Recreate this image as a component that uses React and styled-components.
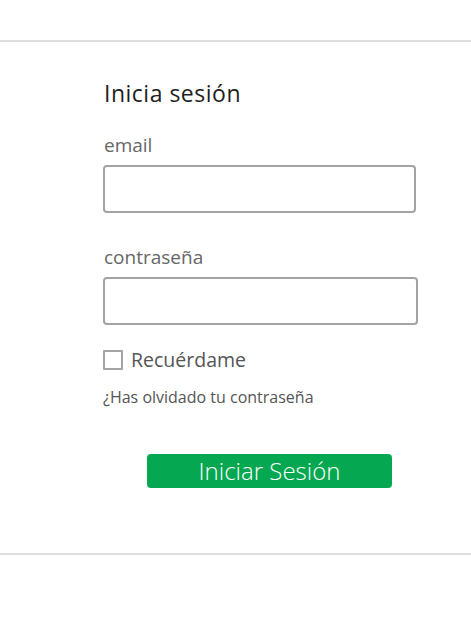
import React from "react";
import styled, { createGlobalStyle } from "styled-components";

const Global = createGlobalStyle`
  html, body { margin: 0; padding: 0; background: #ffffff; }
  body { font-family: "Open Sans", "Noto Sans", sans-serif; }
  * { box-sizing: border-box; }
`;

const Page = styled.div`
  width: 471px;
  min-height: 622px;
  display: flex;
  flex-direction: column;
  background: #fff;
`;

const TopBar = styled.div`
  height: 42px;
  border-bottom: 2px solid #dedede;
`;

const Main = styled.main`
  height: 513px;
  border-bottom: 2px solid #dedede;
  padding: 36px 0 0 103px;
  display: flex;
  flex-direction: column;
  align-items: flex-start;
`;

const Bottom = styled.div`
  flex: 1;
  background: #ffffff;
`;

const Title = styled.h1`
  margin: 0 0 0 1px;
  font-size: 23px;
  line-height: 30px;
  font-weight: 500;
  color: #1e1e1e;
  letter-spacing: 0.5px;
`;

const Label = styled.label`
  display: block;
  margin: ${(p) => p.$top}px 0 0 1px;
  font-size: 19px;
  line-height: 24px;
  color: #666;
`;

const Input = styled.input`
  display: block;
  margin-top: 8px;
  width: ${(p) => p.$w}px;
  height: 48px;
  border: 2px solid #a3a3a3;
  border-radius: 4px;
  background: #fff;
  outline: none;
  font: inherit;
`;

const CheckRow = styled.label`
  display: flex;
  align-items: center;
  gap: 8px;
  margin-top: 24px;
  font-size: 19.5px;
  line-height: 22px;
  color: #555;
`;

const Box = styled.span`
  width: 20px;
  height: 20px;
  border: 2px solid #a3a3a3;
  border-radius: 1px;
  background: #fff;
`;

const Forgot = styled.a`
  margin-top: 16px;
  font-size: 16px;
  line-height: 20px;
  color: #555;
  text-decoration: none;
`;

const Submit = styled.button`
  margin: 47px 0 0 44px;
  width: 245px;
  height: 34px;
  border: none;
  border-radius: 4px;
  background: #05a851;
  color: #fff;
  font-family: inherit;
  font-size: 24px;
  font-weight: 300;
  line-height: 34px;
  padding: 0;
`;

export default function App() {
  return (
    <>
      <Global />
      <Page>
        <TopBar />
        <Main>
          <Title>Inicia sesión</Title>
          <Label $top={25}>email</Label>
          <Input $w={313} type="text" />
          <Label $top={32}>contraseña</Label>
          <Input $w={315} type="password" />
          <CheckRow>
            <Box />
            Recuérdame
          </CheckRow>
          <Forgot>¿Has olvidado tu contraseña</Forgot>
          <Submit>Iniciar Sesión</Submit>
        </Main>
        <Bottom />
      </Page>
    </>
  );
}
